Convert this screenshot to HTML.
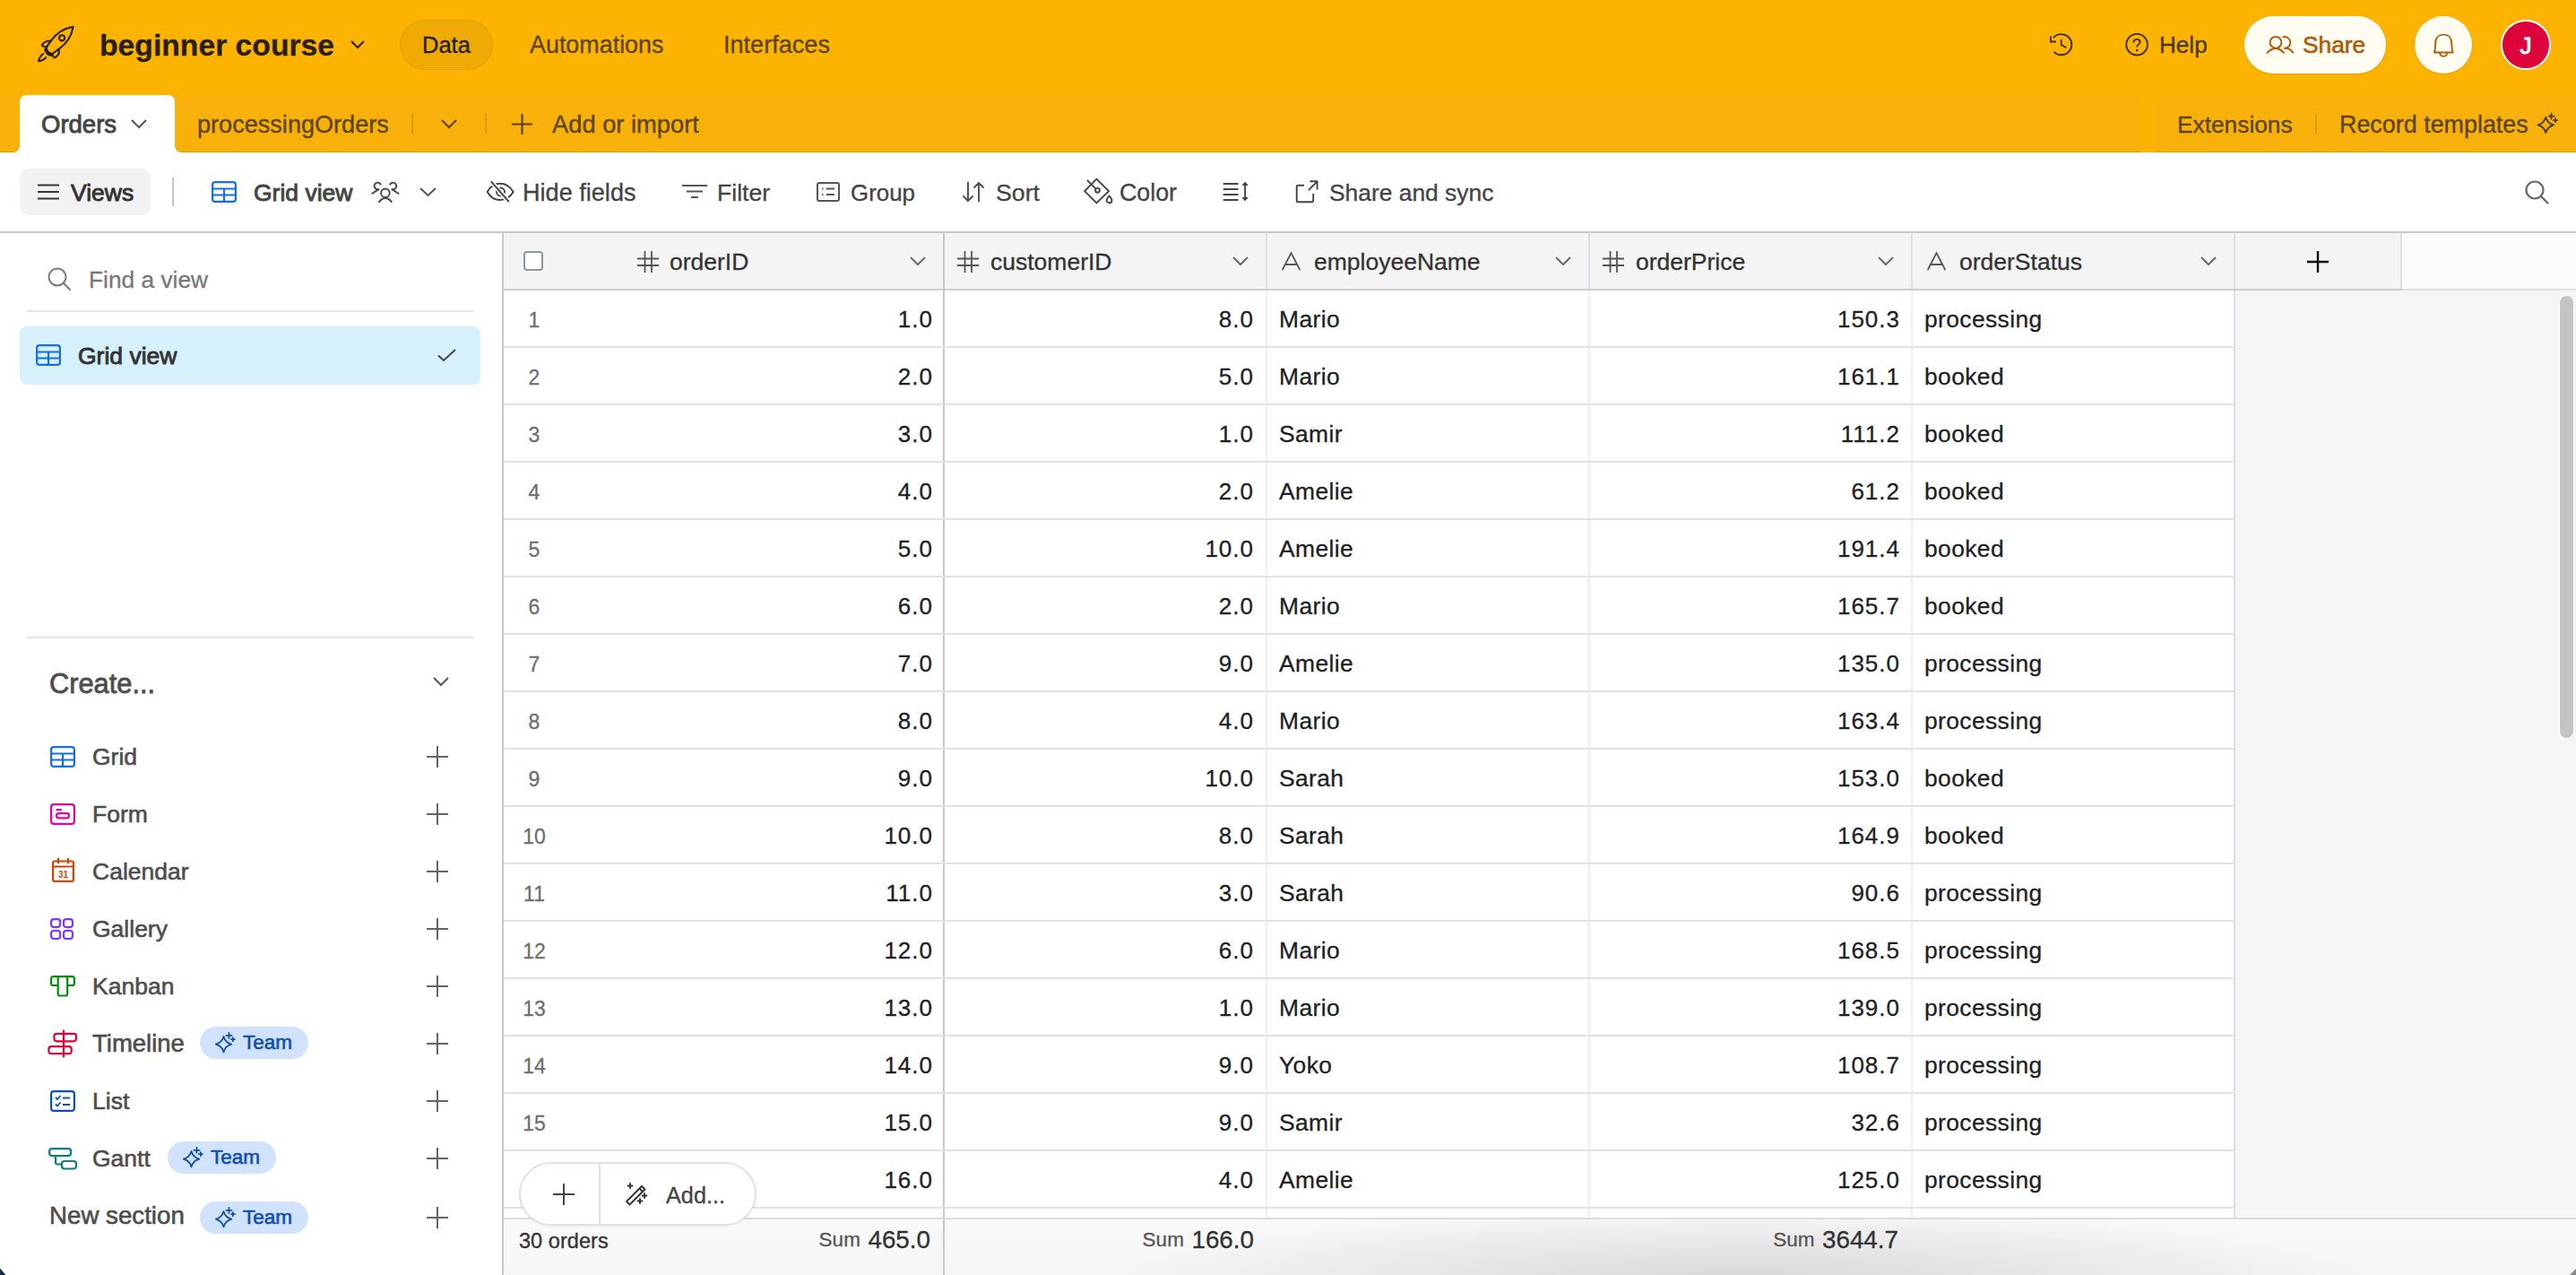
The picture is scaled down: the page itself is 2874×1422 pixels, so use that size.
<!DOCTYPE html>
<html><head><meta charset="utf-8">
<style>
*{box-sizing:border-box;margin:0;padding:0}
html,body{width:2874px;height:1422px;overflow:hidden;background:#fff}
body{position:relative;-webkit-text-stroke:0.3px;font-family:"Liberation Sans",sans-serif;color:#1d1f25}
.a{position:absolute;white-space:nowrap}
svg{position:absolute;overflow:visible}
#top{left:0;top:0;width:2874px;height:170px;background:#fcb400}
.tb{color:#444;font-size:26px;line-height:30px}
.hd{font-size:26.5px;line-height:30px;color:#333}
.cell{font-size:26.4px;line-height:30px;color:#1d1f25;letter-spacing:0.4px}
.num{letter-spacing:1px;font-size:26px}
.rn{font-size:23px;line-height:30px;color:#6e6e6e;text-align:center}
.ft{font-size:23.6px;line-height:30px;color:#333}
.sum{font-size:22.5px;color:#555;position:relative;top:-2px}
.sv{font-size:27.8px;color:#333;margin-left:2px}
.nav{color:#5b4306;font-size:27px;line-height:30px}
</style></head><body>
<!-- TOP BAR -->
<div class="a" id="top"></div>
<!-- rocket -->
<svg style="left:42px;top:29px" width="42" height="42" viewBox="0 0 42 42" fill="none" stroke="#2a1f06" stroke-width="2.1" stroke-linejoin="round" stroke-linecap="round"><path d="M39.6 0.8 C30 2.5 21 8 15 16.3 L9.8 23.6 C9.8 27.5 12.5 30.5 16.3 31 L24.1 25.4 C32 19.5 38 11 39.6 0.8 Z"/><circle cx="27.1" cy="13.3" r="3.1"/><path d="M15 16.5 C10 16.5 6.3 18.3 4.8 21.6 C6 22.9 8 23.4 10.3 23.3"/><path d="M23.6 25.6 C24.6 30 23.2 33.5 18.8 35.5 C17.3 34.5 16.5 33 16.4 31"/><path d="M8.8 26.2 C9.6 29 12 31.6 15.2 32.3" stroke-width="3.4"/><path d="M6.2 31 C3.5 33 1.6 36 1 39.3 C4.3 39 7.3 37.6 9.3 35.2"/></svg>
<div class="a" style="left:111px;top:31px;font-size:33.7px;font-weight:700;color:#2a1f06;line-height:38px">beginner course</div>
<svg style="left:391px;top:45px" width="16" height="10" viewBox="0 0 16 10" fill="none" stroke="#2a1f06" stroke-width="2"><path d="M1 1 L8 8 L15 1"/></svg>
<div class="a" style="left:446px;top:22px;width:104px;height:56px;border-radius:28px;background:#efaa04;border:1px solid rgba(0,0,0,0.06)"></div>
<div class="a nav" style="left:471px;top:35px;font-size:25.5px;color:#261b02">Data</div>
<div class="a nav" style="left:591px;top:35px;font-size:26.9px">Automations</div>
<div class="a nav" style="left:807px;top:35px;font-size:27.1px">Interfaces</div>

<!-- right of top bar -->
<svg style="left:2280px;top:33px" width="34" height="34" viewBox="0 0 34 34" fill="none" stroke="#3d2c05" stroke-width="1.9" stroke-linecap="butt" stroke-linejoin="miter"><path d="M10.8 9.24 A11.6 11.6 0 1 1 11.5 24.9"/><path d="M7.9 7.6 V13.5 H13.9"/><path d="M19.7 10.9 V16.9 L25.3 20.3"/></svg>
<svg style="left:2368px;top:33px" width="34" height="34" viewBox="0 0 34 34" fill="none" stroke="#3d2c05" stroke-width="1.9"><circle cx="16.1" cy="16.7" r="11.8"/><path d="M12.4 14.6 C12.4 12.1 14 10.9 16.1 10.9 C18.2 10.9 19.6 12.2 19.6 14 C19.6 16.2 16.1 16.7 16.1 19.6"/><circle cx="16.1" cy="23.1" r="1.3" fill="#3d2c05" stroke="none"/></svg>
<div class="a nav" style="left:2409px;top:35px;font-size:26.1px;color:#4a3605">Help</div>
<div class="a" style="left:2504px;top:18px;width:158px;height:64px;border-radius:32px;background:#fffcf2;box-shadow:0 1px 2px rgba(0,0,0,0.12)"></div>
<svg style="left:2520px;top:30px" width="50" height="40" viewBox="0 0 50 40" fill="none" stroke="#b05a06" stroke-width="1.9" stroke-linecap="round"><circle cx="19" cy="17.25" r="6.4"/><path d="M9.6 28.8 Q18.8 19.2 28 28.8"/><path d="M27.3 11.2 A6.4 6.4 0 1 1 30 23.7 L29 23.7"/><path d="M29.5 23.8 Q35 23.8 38.2 28.6"/></svg>
<div class="a" style="left:2569px;top:35px;font-size:26.3px;line-height:30px;color:#b05a06;-webkit-text-stroke:0.6px #b05a06">Share</div>
<div class="a" style="left:2694px;top:18px;width:64px;height:64px;border-radius:32px;background:#fffcf2;box-shadow:0 1px 2px rgba(0,0,0,0.12)"></div>
<svg style="left:2700px;top:30px" width="50" height="40" viewBox="0 0 50 40" fill="none" stroke="#b05a06" stroke-width="1.9" stroke-linejoin="round"><path d="M16 28.5 C17 25 17.2 22 17.2 18 C17.2 12 21 8.6 26.3 8.6 C31.6 8.6 35.2 12 35.2 18 C35.2 22 35.5 25 36.6 28.5 Z"/><path d="M22.2 28.8 C22.6 34.2 29.8 34.2 30.2 28.8"/></svg>
<div class="a" style="left:2790px;top:22px;width:56px;height:56px;border-radius:28px;background:#dc043b;border:2.5px solid #fff"></div>
<div class="a" style="left:2790px;top:36px;width:56px;text-align:center;font-size:26px;line-height:30px;color:#fff;-webkit-text-stroke:0.9px #fff">J</div>

<!-- TAB BAR -->
<div class="a" style="left:0;top:106px;width:2388px;height:64px;background:#f7b10a;border-top-right-radius:12px;box-shadow:inset 0 -1px 0 rgba(150,90,0,0.25)"></div>
<div class="a" style="left:2404px;top:106px;width:470px;height:64px;background:#f7b10a;border-top-left-radius:12px;box-shadow:inset 0 -1px 0 rgba(150,90,0,0.25)"></div>
<div class="a" style="left:22px;top:106px;width:173px;height:64px;background:#fff;border-radius:7px 7px 0 0"></div>
<div class="a" style="left:15px;top:163px;width:7px;height:7px;background:radial-gradient(circle at 0 0,transparent 6.5px,#fff 7px)"></div>
<div class="a" style="left:195px;top:163px;width:7px;height:7px;background:radial-gradient(circle at 100% 0,transparent 6.5px,#fff 7px)"></div>
<div class="a" style="left:46px;top:124px;font-size:27.5px;line-height:30px;color:#444;-webkit-text-stroke:0.9px #444">Orders</div>
<svg style="left:146px;top:133px" width="18" height="10" viewBox="0 0 18 10" fill="none" stroke="#555" stroke-width="2"><path d="M1 1 L9 9 L17 1"/></svg>
<div class="a nav" style="left:220px;top:124px;font-size:27.1px">processingOrders</div>
<div class="a" style="left:459px;top:127px;width:2px;height:23px;background:rgba(120,80,0,0.22)"></div>
<svg style="left:492px;top:133px" width="18" height="10" viewBox="0 0 18 10" fill="none" stroke="#5b4306" stroke-width="2"><path d="M1 1 L9 9 L17 1"/></svg>
<div class="a" style="left:541px;top:127px;width:2px;height:23px;background:rgba(120,80,0,0.22)"></div>
<svg style="left:571px;top:127px" width="23" height="23" viewBox="0 0 23 23" fill="none" stroke="#5b4306" stroke-width="2.2"><path d="M11.5 0 V23 M0 11.5 H23"/></svg>
<div class="a nav" style="left:616px;top:124px;font-size:27.3px">Add or import</div>
<div class="a nav" style="left:2429px;top:124px;font-size:26.3px">Extensions</div>
<div class="a" style="left:2583px;top:127px;width:2px;height:23px;background:rgba(120,80,0,0.22)"></div>
<div class="a nav" style="left:2610px;top:124px;font-size:26.9px">Record templates</div>
<svg style="left:2820px;top:115px" width="54" height="45" viewBox="0 0 54 45" fill="none" stroke="#4a3605" stroke-width="1.8" stroke-linejoin="round" stroke-linecap="round"><path transform="translate(20.3 24.4)" d="M0 -8.7 C1.2 -4.5 4.5 -1.2 8.7 0 C4.5 1.2 1.2 4.5 0 8.7 C-1.2 4.5 -4.5 1.2 -8.7 0 C-4.5 -1.2 -1.2 -4.5 0 -8.7 Z"/><path d="M26.5 11.6 V17.6 M23.5 14.6 H29.5 M30.9 17.2 V21.2 M28.9 19.2 H32.9"/></svg>

<!-- TOOLBAR -->
<div class="a" style="left:0;top:258px;width:2874px;height:2px;background:#c9c9c9"></div>
<div class="a" style="left:22px;top:188px;width:146px;height:52px;border-radius:10px;background:#f2f2f2"></div>
<svg style="left:42px;top:205px" width="24" height="18" viewBox="0 0 24 18" fill="none" stroke="#333" stroke-width="2.2"><path d="M0 1.5 H24 M0 9 H24 M0 16.5 H24"/></svg>
<div class="a tb" style="left:79px;top:200px;color:#333;font-size:26.5px;-webkit-text-stroke:0.9px #333">Views</div>
<div class="a" style="left:192px;top:198px;width:2px;height:32px;background:#c4c4c4"></div>
<svg style="left:236px;top:202px" width="28" height="24" viewBox="0 0 28 24" fill="none" stroke="#166ee1" stroke-width="2.2"><rect x="1.1" y="1.1" width="25.8" height="21.8" rx="3"/><path d="M1 8.5 H27 M1 15.5 H27 M14 8.5 V23"/></svg>
<div class="a tb" style="left:283px;top:200px;color:#444;font-size:26.5px;-webkit-text-stroke:0.9px #444">Grid view</div>
<svg style="left:410px;top:200px" width="40" height="30" viewBox="0 0 40 30" fill="none" stroke="#444" stroke-width="1.9" stroke-linecap="butt"><circle cx="19.9" cy="15.3" r="4.8"/><path d="M12.5 25.6 Q19.9 16.4 27.3 25.6"/><path d="M15 6.3 A3.8 3.8 0 1 0 13 10.9 L4.6 16.2"/><path d="M24.8 6.3 A3.8 3.8 0 1 1 26.8 10.9 L35.2 16.2"/></svg>
<svg style="left:468px;top:209px" width="19" height="10" viewBox="0 0 19 10" fill="none" stroke="#555" stroke-width="2"><path d="M1 1 L9.5 9 L18 1"/></svg>
<svg style="left:540px;top:200px" width="36" height="28" viewBox="0 0 36 28" fill="none" stroke="#444" stroke-width="1.9"><path d="M3.7 14 C7 8 11.5 4.8 18 4.8 C24.5 4.8 29 8 32.7 14 C29 20 24.5 23 18 23 C11.5 23 7 20 3.7 14 Z"/><circle cx="18.5" cy="14" r="4.5"/><path d="M7.9 2.3 L27.8 25" stroke="#fff" stroke-width="5"/><path d="M7.9 2.3 L27.8 25"/></svg>
<div class="a tb" style="left:583px;top:200px;font-size:27.1px">Hide fields</div>
<svg style="left:761px;top:206px" width="28" height="15" viewBox="0 0 28 15" fill="none" stroke="#555" stroke-width="2"><path d="M0 1 H28 M5 7.5 H23 M10 14 H18"/></svg>
<div class="a tb" style="left:800px;top:200px;font-size:26.6px">Filter</div>
<svg style="left:911px;top:203px" width="26" height="22" viewBox="0 0 26 22" fill="none" stroke="#555" stroke-width="2"><rect x="1" y="1" width="24" height="20" rx="2"/><path d="M6 7.5 H7.5 M11 7.5 H20 M6 14 H7.5 M11 14 H20"/></svg>
<div class="a tb" style="left:949px;top:200px;font-size:25.9px">Group</div>
<svg style="left:1074px;top:203px" width="24" height="22" viewBox="0 0 24 22" fill="none" stroke="#555" stroke-width="2" stroke-linecap="round"><path d="M6 0.5 V21 M1 16 L6 21 L11 16 M18 21.5 V1 M13 6 L18 1 L23 6"/></svg>
<div class="a tb" style="left:1111px;top:200px;font-size:26.7px">Sort</div>
<svg style="left:1205px;top:195px" width="40" height="36" viewBox="0 0 40 36" fill="none" stroke="#444" stroke-width="1.9" stroke-linejoin="round"><path d="M18.4 4.6 L32 18.2 L18.4 31.4 L5.1 18.2 Z"/><path d="M8 6 L17.6 15.6"/><circle cx="19.5" cy="17.3" r="2.4"/><path d="M32.5 23.3 C34.5 25.6 35.4 27 35.4 28.4 A2.9 2.9 0 0 1 29.6 28.4 C29.6 27 30.5 25.6 32.5 23.3 Z"/></svg>
<div class="a tb" style="left:1249px;top:200px;font-size:26.8px">Color</div>
<svg style="left:1360px;top:200px" width="36" height="28" viewBox="0 0 36 28" fill="#444" stroke="#444" stroke-width="1.9"><path d="M4.7 5 H21.5 M4.7 11 H21.5 M4.7 17 H21.5 M4.7 23 H21.5" fill="none"/><path d="M29.1 5 V22" fill="none"/><path d="M26.2 6.5 L29.1 3.2 L32 6.5 Z M26.2 20.5 L29.1 23.8 L32 20.5 Z" stroke-width="1" stroke-linejoin="round"/></svg>
<svg style="left:1440px;top:196px" width="36" height="34" viewBox="0 0 36 34" fill="none" stroke="#444" stroke-width="1.9" stroke-linejoin="round"><path d="M14.9 10.7 H8.6 A1.9 1.9 0 0 0 6.7 12.6 V27.3 A1.9 1.9 0 0 0 8.6 29.2 H23.3 A1.9 1.9 0 0 0 25.2 27.3 V19.9"/><path d="M19.8 16.1 L29.6 6.3 M21.4 6.3 H29.6 V15.6"/></svg>
<div class="a tb" style="left:1483px;top:200px;font-size:26.4px">Share and sync</div>
<svg style="left:2817px;top:201px" width="27" height="27" viewBox="0 0 27 27" fill="none" stroke="#666" stroke-width="2.2" stroke-linecap="round"><circle cx="11" cy="11" r="9.5"/><path d="M18 18 L25.5 25.5"/></svg>

<!-- SIDEBAR -->
<div class="a" style="left:560px;top:260px;width:2px;height:1162px;background:#c9c9c9"></div>
<svg style="left:53px;top:298px" width="26" height="26" viewBox="0 0 26 26" fill="none" stroke="#777" stroke-width="2" stroke-linecap="round"><circle cx="11" cy="11" r="9.5"/><path d="M18 18 L25 25"/></svg>
<div class="a" style="left:99px;top:297px;font-size:26.3px;line-height:30px;color:#777">Find a view</div>
<div class="a" style="left:30px;top:346px;width:498px;height:2px;background:#e3e3e3"></div>
<div class="a" style="left:22px;top:364px;width:514px;height:65px;border-radius:8px;background:#d6f0fc"></div>
<svg style="left:40px;top:384px" width="28" height="24" viewBox="0 0 28 24" fill="none" stroke="#166ee1" stroke-width="2.2"><rect x="1.1" y="1.1" width="25.8" height="21.8" rx="3"/><path d="M1 8.5 H27 M1 15.5 H27 M14 8.5 V23"/></svg>
<div class="a" style="left:87px;top:382px;font-size:26.5px;line-height:30px;color:#333;-webkit-text-stroke:0.9px #333">Grid view</div>
<svg style="left:488px;top:389px" width="21" height="14" viewBox="0 0 21 14" fill="none" stroke="#444" stroke-width="2"><path d="M1 7.5 L7 13 L20 1"/></svg>
<div class="a" style="left:30px;top:710px;width:498px;height:2px;background:#e3e3e3"></div>
<div class="a" style="left:55px;top:746px;font-size:30.8px;line-height:34px;color:#4d4d4d;-webkit-text-stroke:0.8px #4d4d4d">Create...</div>
<svg style="left:483px;top:755px" width="18" height="10" viewBox="0 0 18 10" fill="none" stroke="#555" stroke-width="2"><path d="M1 1 L9 9 L17 1"/></svg>
<svg style="left:56px;top:832px" width="28" height="24" viewBox="0 0 28 24" fill="none" stroke="#166ee1" stroke-width="2.2"><rect x="1.1" y="1.1" width="25.8" height="21.8" rx="3"/><path d="M1 8.5 H27 M1 15.5 H27 M14 8.5 V23"/></svg>
<div class="a" style="left:103px;top:829px;font-size:26.5px;line-height:30px;color:#4d4d4d;-webkit-text-stroke:0.6px #4d4d4d">Grid</div>
<svg style="left:476px;top:832px" width="24" height="24" viewBox="0 0 24 24" fill="none" stroke="#666" stroke-width="2"><path d="M12 0 V24 M0 12 H24"/></svg>
<svg style="left:56px;top:896px" width="28" height="24" viewBox="0 0 28 24" fill="none" stroke="#dd04a8" stroke-width="2.2"><rect x="1.1" y="1.1" width="25.8" height="21.8" rx="3"/><path d="M7.5 7.2 H12" stroke-linecap="round"/><rect x="7" y="11.2" width="14" height="5.2" rx="2.6"/></svg>
<div class="a" style="left:103px;top:893px;font-size:26.5px;line-height:30px;color:#4d4d4d;-webkit-text-stroke:0.6px #4d4d4d">Form</div>
<svg style="left:476px;top:896px" width="24" height="24" viewBox="0 0 24 24" fill="none" stroke="#666" stroke-width="2"><path d="M12 0 V24 M0 12 H24"/></svg>
<svg style="left:58px;top:957px" width="25" height="27" viewBox="0 0 25 27" fill="none" stroke="#d54401" stroke-width="2.2"><rect x="1.1" y="3.5" width="22.8" height="22.4" rx="2"/><path d="M1 9.5 H24 M7 0 V6 M18 0 V6"/><text x="12.5" y="22" font-family="Liberation Sans" font-size="10" font-weight="700" fill="#d54401" stroke="none" text-anchor="middle">31</text></svg>
<div class="a" style="left:103px;top:957px;font-size:26.5px;line-height:30px;color:#4d4d4d;-webkit-text-stroke:0.6px #4d4d4d">Calendar</div>
<svg style="left:476px;top:960px" width="24" height="24" viewBox="0 0 24 24" fill="none" stroke="#666" stroke-width="2"><path d="M12 0 V24 M0 12 H24"/></svg>
<svg style="left:56px;top:1024px" width="26" height="24" viewBox="0 0 26 24" fill="none" stroke="#7c37ef" stroke-width="2.2"><rect x="1.1" y="1.1" width="10" height="9" rx="3"/><rect x="15" y="1.1" width="10" height="9" rx="3"/><rect x="1.1" y="14" width="10" height="9" rx="3"/><rect x="15" y="14" width="10" height="9" rx="3"/></svg>
<div class="a" style="left:103px;top:1021px;font-size:26.5px;line-height:30px;color:#4d4d4d;-webkit-text-stroke:0.6px #4d4d4d">Gallery</div>
<svg style="left:476px;top:1024px" width="24" height="24" viewBox="0 0 24 24" fill="none" stroke="#666" stroke-width="2"><path d="M12 0 V24 M0 12 H24"/></svg>
<svg style="left:56px;top:1088px" width="28" height="24" viewBox="0 0 28 24" fill="none" stroke="#048a0e" stroke-width="2.2" stroke-linejoin="round"><path d="M19.2 11 H24.9 A2 2 0 0 0 26.9 9 V3.5 A2.4 2.4 0 0 0 24.5 1.1 H3.5 A2.4 2.4 0 0 0 1.1 3.5 V9 A2 2 0 0 0 3.1 11 H8.7"/><path d="M8.7 1.1 V20.5 A2 2 0 0 0 10.7 22.5 H17.2 A2 2 0 0 0 19.2 20.5 V1.1"/></svg>
<div class="a" style="left:103px;top:1085px;font-size:26.5px;line-height:30px;color:#4d4d4d;-webkit-text-stroke:0.6px #4d4d4d">Kanban</div>
<svg style="left:476px;top:1088px" width="24" height="24" viewBox="0 0 24 24" fill="none" stroke="#666" stroke-width="2"><path d="M12 0 V24 M0 12 H24"/></svg>
<svg style="left:53px;top:1147px" width="34" height="34" viewBox="0 0 34 34" fill="none" stroke="#dc043b" stroke-width="2.2"><path d="M18 1.7 V32.3"/><rect x="7.4" y="5.8" width="24.6" height="8.5" rx="3"/><rect x="1.4" y="20.2" width="25.3" height="8" rx="3"/></svg>
<div class="a" style="left:103px;top:1149px;font-size:27.5px;line-height:30px;color:#4d4d4d;-webkit-text-stroke:0.6px #4d4d4d">Timeline</div>
<svg style="left:476px;top:1152px" width="24" height="24" viewBox="0 0 24 24" fill="none" stroke="#666" stroke-width="2"><path d="M12 0 V24 M0 12 H24"/></svg>
<svg style="left:56px;top:1216px" width="28" height="24" viewBox="0 0 28 24" fill="none" stroke="#0d52ac" stroke-width="2.2"><rect x="1.1" y="1.1" width="25.8" height="21.8" rx="3"/><path d="M6 8 L8 10 L11.5 6 M6 15.5 L8 17.5 L11.5 13.5" stroke-width="1.8"/><path d="M14 8.5 H22 M14 16 H22" stroke-width="1.8"/></svg>
<div class="a" style="left:103px;top:1213px;font-size:26.5px;line-height:30px;color:#4d4d4d;-webkit-text-stroke:0.6px #4d4d4d">List</div>
<svg style="left:476px;top:1216px" width="24" height="24" viewBox="0 0 24 24" fill="none" stroke="#666" stroke-width="2"><path d="M12 0 V24 M0 12 H24"/></svg>
<svg style="left:54px;top:1280px" width="32" height="25" viewBox="0 0 32 25" fill="none" stroke="#0f7e7e" stroke-width="2.2"><rect x="1.1" y="1.1" width="24" height="8" rx="3"/><rect x="15" y="15" width="16" height="8.5" rx="3"/><path d="M8 9 V16 A2 2 0 0 0 10 18.5 H15"/></svg>
<div class="a" style="left:103px;top:1277px;font-size:26.5px;line-height:30px;color:#4d4d4d;-webkit-text-stroke:0.6px #4d4d4d">Gantt</div>
<svg style="left:476px;top:1280px" width="24" height="24" viewBox="0 0 24 24" fill="none" stroke="#666" stroke-width="2"><path d="M12 0 V24 M0 12 H24"/></svg>
<div class="a" style="left:55px;top:1341px;font-size:27.7px;line-height:30px;color:#4d4d4d;-webkit-text-stroke:0.6px #4d4d4d">New section</div>
<svg style="left:476px;top:1346px" width="24" height="24" viewBox="0 0 24 24" fill="none" stroke="#666" stroke-width="2"><path d="M12 0 V24 M0 12 H24"/></svg>
<div class="a" style="left:223px;top:1145px;width:121px;height:36px;border-radius:18px;background:#d1e2fc"></div><svg style="left:223px;top:1145px" width="50" height="36" viewBox="0 0 50 36" fill="none" stroke="#0f4fad" stroke-width="1.8" stroke-linejoin="round" stroke-linecap="round"><path transform="translate(26.5 19.7)" d="M0 -8.7 C1.2 -4.5 4.5 -1.2 8.7 0 C4.5 1.2 1.2 4.5 0 8.7 C-1.2 4.5 -4.5 1.2 -8.7 0 C-4.5 -1.2 -1.2 -4.5 0 -8.7 Z"/><path d="M32.5 6.8 V12.8 M29.5 9.8 H35.5 M36.9 12.2 V16.2 M34.9 14.2 H38.9"/></svg><div class="a" style="left:271px;top:1148px;font-size:22.5px;line-height:30px;color:#0f4fad;-webkit-text-stroke:0.6px #0f4fad">Team</div>
<div class="a" style="left:187px;top:1273px;width:121px;height:36px;border-radius:18px;background:#d1e2fc"></div><svg style="left:187px;top:1273px" width="50" height="36" viewBox="0 0 50 36" fill="none" stroke="#0f4fad" stroke-width="1.8" stroke-linejoin="round" stroke-linecap="round"><path transform="translate(26.5 19.7)" d="M0 -8.7 C1.2 -4.5 4.5 -1.2 8.7 0 C4.5 1.2 1.2 4.5 0 8.7 C-1.2 4.5 -4.5 1.2 -8.7 0 C-4.5 -1.2 -1.2 -4.5 0 -8.7 Z"/><path d="M32.5 6.8 V12.8 M29.5 9.8 H35.5 M36.9 12.2 V16.2 M34.9 14.2 H38.9"/></svg><div class="a" style="left:235px;top:1276px;font-size:22.5px;line-height:30px;color:#0f4fad;-webkit-text-stroke:0.6px #0f4fad">Team</div>
<div class="a" style="left:223px;top:1340px;width:121px;height:36px;border-radius:18px;background:#d1e2fc"></div><svg style="left:223px;top:1340px" width="50" height="36" viewBox="0 0 50 36" fill="none" stroke="#0f4fad" stroke-width="1.8" stroke-linejoin="round" stroke-linecap="round"><path transform="translate(26.5 19.7)" d="M0 -8.7 C1.2 -4.5 4.5 -1.2 8.7 0 C4.5 1.2 1.2 4.5 0 8.7 C-1.2 4.5 -4.5 1.2 -8.7 0 C-4.5 -1.2 -1.2 -4.5 0 -8.7 Z"/><path d="M32.5 6.8 V12.8 M29.5 9.8 H35.5 M36.9 12.2 V16.2 M34.9 14.2 H38.9"/></svg><div class="a" style="left:271px;top:1343px;font-size:22.5px;line-height:30px;color:#0f4fad;-webkit-text-stroke:0.6px #0f4fad">Team</div>

<!-- GRID -->
<div class="a" style="left:562px;top:260px;width:2312px;height:62px;background:#fafafa"></div>
<div class="a" style="left:562px;top:260px;width:2118px;height:62px;background:#f4f4f4"></div>
<div class="a" style="left:562px;top:322px;width:2118px;height:2px;background:#cdcdcd"></div><div class="a" style="left:2680px;top:322px;width:194px;height:2px;background:#dfe3e6"></div>
<div class="a" style="left:2494px;top:324px;width:380px;height:1035px;background:#f5f5f5"></div>
<div class="a" style="left:562px;top:324px;width:1932px;height:1035px;background:#fff"></div>
<div class="a" style="left:1052px;top:260px;width:2px;height:62px;background:#c8c8c8"></div>
<div class="a" style="left:1412px;top:260px;width:2px;height:62px;background:#dde1e6"></div>
<div class="a" style="left:1772px;top:260px;width:2px;height:62px;background:#dde1e6"></div>
<div class="a" style="left:2132px;top:260px;width:2px;height:62px;background:#dde1e6"></div>
<div class="a" style="left:2492px;top:260px;width:2px;height:62px;background:#dde1e6"></div>
<div class="a" style="left:2678px;top:260px;width:2px;height:62px;background:#dde1e6"></div>
<div class="a" style="left:1052px;top:324px;width:2px;height:1035px;background:#c8c8c8"></div>
<div class="a" style="left:1412px;top:324px;width:2px;height:1035px;background:#eceef0"></div>
<div class="a" style="left:1772px;top:324px;width:2px;height:1035px;background:#eceef0"></div>
<div class="a" style="left:2132px;top:324px;width:2px;height:1035px;background:#eceef0"></div>
<div class="a" style="left:2492px;top:324px;width:2px;height:1035px;background:#dde1e6"></div>
<div class="a" style="left:562px;top:386px;width:1932px;height:2px;background:#dfe3e6"></div>
<div class="a" style="left:562px;top:450px;width:1932px;height:2px;background:#dfe3e6"></div>
<div class="a" style="left:562px;top:514px;width:1932px;height:2px;background:#dfe3e6"></div>
<div class="a" style="left:562px;top:578px;width:1932px;height:2px;background:#dfe3e6"></div>
<div class="a" style="left:562px;top:642px;width:1932px;height:2px;background:#dfe3e6"></div>
<div class="a" style="left:562px;top:706px;width:1932px;height:2px;background:#dfe3e6"></div>
<div class="a" style="left:562px;top:770px;width:1932px;height:2px;background:#dfe3e6"></div>
<div class="a" style="left:562px;top:834px;width:1932px;height:2px;background:#dfe3e6"></div>
<div class="a" style="left:562px;top:898px;width:1932px;height:2px;background:#dfe3e6"></div>
<div class="a" style="left:562px;top:962px;width:1932px;height:2px;background:#dfe3e6"></div>
<div class="a" style="left:562px;top:1026px;width:1932px;height:2px;background:#dfe3e6"></div>
<div class="a" style="left:562px;top:1090px;width:1932px;height:2px;background:#dfe3e6"></div>
<div class="a" style="left:562px;top:1154px;width:1932px;height:2px;background:#dfe3e6"></div>
<div class="a" style="left:562px;top:1218px;width:1932px;height:2px;background:#dfe3e6"></div>
<div class="a" style="left:562px;top:1282px;width:1932px;height:2px;background:#dfe3e6"></div>
<div class="a" style="left:562px;top:1346px;width:1932px;height:2px;background:#dfe3e6"></div>
<div class="a" style="left:584px;top:280px;width:22px;height:22px;border:2px solid #8a9aa3;border-radius:4px;background:#fff"></div>
<svg style="left:711px;top:280px" width="24" height="24" viewBox="0 0 24 24" fill="none" stroke="#555" stroke-width="1.8"><path d="M8.5 0 V24 M16 0 V24 M0 8.5 H24 M0 16 H24"/></svg>
<div class="a hd" style="left:747px;top:277px">orderID</div>
<svg style="left:1015px;top:286px" width="18" height="10" viewBox="0 0 18 10" fill="none" stroke="#6b6b6b" stroke-width="2"><path d="M1 1 L9 9 L17 1"/></svg>
<svg style="left:1068px;top:280px" width="24" height="24" viewBox="0 0 24 24" fill="none" stroke="#555" stroke-width="1.8"><path d="M8.5 0 V24 M16 0 V24 M0 8.5 H24 M0 16 H24"/></svg>
<div class="a hd" style="left:1105px;top:277px">customerID</div>
<svg style="left:1375px;top:286px" width="18" height="10" viewBox="0 0 18 10" fill="none" stroke="#6b6b6b" stroke-width="2"><path d="M1 1 L9 9 L17 1"/></svg>
<svg style="left:1430px;top:281px" width="21" height="20" viewBox="0 0 21 20" fill="none" stroke="#555" stroke-width="1.8" stroke-linecap="round"><path d="M1 19.5 L10.5 1.2 L20 19.5 M5 14 H16"/></svg>
<div class="a hd" style="left:1466px;top:277px">employeeName</div>
<svg style="left:1735px;top:286px" width="18" height="10" viewBox="0 0 18 10" fill="none" stroke="#6b6b6b" stroke-width="2"><path d="M1 1 L9 9 L17 1"/></svg>
<svg style="left:1788px;top:280px" width="24" height="24" viewBox="0 0 24 24" fill="none" stroke="#555" stroke-width="1.8"><path d="M8.5 0 V24 M16 0 V24 M0 8.5 H24 M0 16 H24"/></svg>
<div class="a hd" style="left:1825px;top:277px">orderPrice</div>
<svg style="left:2095px;top:286px" width="18" height="10" viewBox="0 0 18 10" fill="none" stroke="#6b6b6b" stroke-width="2"><path d="M1 1 L9 9 L17 1"/></svg>
<svg style="left:2150px;top:281px" width="21" height="20" viewBox="0 0 21 20" fill="none" stroke="#555" stroke-width="1.8" stroke-linecap="round"><path d="M1 19.5 L10.5 1.2 L20 19.5 M5 14 H16"/></svg>
<div class="a hd" style="left:2186px;top:277px">orderStatus</div>
<svg style="left:2455px;top:286px" width="18" height="10" viewBox="0 0 18 10" fill="none" stroke="#6b6b6b" stroke-width="2"><path d="M1 1 L9 9 L17 1"/></svg>
<svg style="left:2574px;top:280px" width="24" height="24" viewBox="0 0 24 24" fill="none" stroke="#111" stroke-width="2.4"><path d="M12 0 V24 M0 12 H24"/></svg>
<div class="a rn" style="left:562px;top:342px;width:68px">1</div>
<div class="a cell num" style="right:1833px;top:341px">1.0</div>
<div class="a cell num" style="right:1475px;top:341px">8.0</div>
<div class="a cell" style="left:1427px;top:341px">Mario</div>
<div class="a cell num" style="right:754px;top:341px">150.3</div>
<div class="a cell" style="left:2147px;top:341px">processing</div>
<div class="a rn" style="left:562px;top:406px;width:68px">2</div>
<div class="a cell num" style="right:1833px;top:405px">2.0</div>
<div class="a cell num" style="right:1475px;top:405px">5.0</div>
<div class="a cell" style="left:1427px;top:405px">Mario</div>
<div class="a cell num" style="right:754px;top:405px">161.1</div>
<div class="a cell" style="left:2147px;top:405px">booked</div>
<div class="a rn" style="left:562px;top:470px;width:68px">3</div>
<div class="a cell num" style="right:1833px;top:469px">3.0</div>
<div class="a cell num" style="right:1475px;top:469px">1.0</div>
<div class="a cell" style="left:1427px;top:469px">Samir</div>
<div class="a cell num" style="right:754px;top:469px">111.2</div>
<div class="a cell" style="left:2147px;top:469px">booked</div>
<div class="a rn" style="left:562px;top:534px;width:68px">4</div>
<div class="a cell num" style="right:1833px;top:533px">4.0</div>
<div class="a cell num" style="right:1475px;top:533px">2.0</div>
<div class="a cell" style="left:1427px;top:533px">Amelie</div>
<div class="a cell num" style="right:754px;top:533px">61.2</div>
<div class="a cell" style="left:2147px;top:533px">booked</div>
<div class="a rn" style="left:562px;top:598px;width:68px">5</div>
<div class="a cell num" style="right:1833px;top:597px">5.0</div>
<div class="a cell num" style="right:1475px;top:597px">10.0</div>
<div class="a cell" style="left:1427px;top:597px">Amelie</div>
<div class="a cell num" style="right:754px;top:597px">191.4</div>
<div class="a cell" style="left:2147px;top:597px">booked</div>
<div class="a rn" style="left:562px;top:662px;width:68px">6</div>
<div class="a cell num" style="right:1833px;top:661px">6.0</div>
<div class="a cell num" style="right:1475px;top:661px">2.0</div>
<div class="a cell" style="left:1427px;top:661px">Mario</div>
<div class="a cell num" style="right:754px;top:661px">165.7</div>
<div class="a cell" style="left:2147px;top:661px">booked</div>
<div class="a rn" style="left:562px;top:726px;width:68px">7</div>
<div class="a cell num" style="right:1833px;top:725px">7.0</div>
<div class="a cell num" style="right:1475px;top:725px">9.0</div>
<div class="a cell" style="left:1427px;top:725px">Amelie</div>
<div class="a cell num" style="right:754px;top:725px">135.0</div>
<div class="a cell" style="left:2147px;top:725px">processing</div>
<div class="a rn" style="left:562px;top:790px;width:68px">8</div>
<div class="a cell num" style="right:1833px;top:789px">8.0</div>
<div class="a cell num" style="right:1475px;top:789px">4.0</div>
<div class="a cell" style="left:1427px;top:789px">Mario</div>
<div class="a cell num" style="right:754px;top:789px">163.4</div>
<div class="a cell" style="left:2147px;top:789px">processing</div>
<div class="a rn" style="left:562px;top:854px;width:68px">9</div>
<div class="a cell num" style="right:1833px;top:853px">9.0</div>
<div class="a cell num" style="right:1475px;top:853px">10.0</div>
<div class="a cell" style="left:1427px;top:853px">Sarah</div>
<div class="a cell num" style="right:754px;top:853px">153.0</div>
<div class="a cell" style="left:2147px;top:853px">booked</div>
<div class="a rn" style="left:562px;top:918px;width:68px">10</div>
<div class="a cell num" style="right:1833px;top:917px">10.0</div>
<div class="a cell num" style="right:1475px;top:917px">8.0</div>
<div class="a cell" style="left:1427px;top:917px">Sarah</div>
<div class="a cell num" style="right:754px;top:917px">164.9</div>
<div class="a cell" style="left:2147px;top:917px">booked</div>
<div class="a rn" style="left:562px;top:982px;width:68px">11</div>
<div class="a cell num" style="right:1833px;top:981px">11.0</div>
<div class="a cell num" style="right:1475px;top:981px">3.0</div>
<div class="a cell" style="left:1427px;top:981px">Sarah</div>
<div class="a cell num" style="right:754px;top:981px">90.6</div>
<div class="a cell" style="left:2147px;top:981px">processing</div>
<div class="a rn" style="left:562px;top:1046px;width:68px">12</div>
<div class="a cell num" style="right:1833px;top:1045px">12.0</div>
<div class="a cell num" style="right:1475px;top:1045px">6.0</div>
<div class="a cell" style="left:1427px;top:1045px">Mario</div>
<div class="a cell num" style="right:754px;top:1045px">168.5</div>
<div class="a cell" style="left:2147px;top:1045px">processing</div>
<div class="a rn" style="left:562px;top:1110px;width:68px">13</div>
<div class="a cell num" style="right:1833px;top:1109px">13.0</div>
<div class="a cell num" style="right:1475px;top:1109px">1.0</div>
<div class="a cell" style="left:1427px;top:1109px">Mario</div>
<div class="a cell num" style="right:754px;top:1109px">139.0</div>
<div class="a cell" style="left:2147px;top:1109px">processing</div>
<div class="a rn" style="left:562px;top:1174px;width:68px">14</div>
<div class="a cell num" style="right:1833px;top:1173px">14.0</div>
<div class="a cell num" style="right:1475px;top:1173px">9.0</div>
<div class="a cell" style="left:1427px;top:1173px">Yoko</div>
<div class="a cell num" style="right:754px;top:1173px">108.7</div>
<div class="a cell" style="left:2147px;top:1173px">processing</div>
<div class="a rn" style="left:562px;top:1238px;width:68px">15</div>
<div class="a cell num" style="right:1833px;top:1237px">15.0</div>
<div class="a cell num" style="right:1475px;top:1237px">9.0</div>
<div class="a cell" style="left:1427px;top:1237px">Samir</div>
<div class="a cell num" style="right:754px;top:1237px">32.6</div>
<div class="a cell" style="left:2147px;top:1237px">processing</div>
<div class="a cell num" style="right:1833px;top:1301px">16.0</div>
<div class="a cell num" style="right:1475px;top:1301px">4.0</div>
<div class="a cell" style="left:1427px;top:1301px">Amelie</div>
<div class="a cell num" style="right:754px;top:1301px">125.0</div>
<div class="a cell" style="left:2147px;top:1301px">processing</div>
<div class="a" style="left:2855px;top:329px;width:17px;height:495px;border-radius:9px;background:#c4c4c4;border:1px solid #fff"></div>
<div class="a" style="left:562px;top:1358px;width:2312px;height:64px;background:radial-gradient(ellipse 700px 80px at 1380px 105%,#d9d9d9,rgba(235,235,235,0) 100%),linear-gradient(#f9f9f9,#f5f5f5);border-top:2px solid #d9dde0"></div>
<div class="a" style="left:1052px;top:1360px;width:2px;height:62px;background:#c8c8c8"></div>
<div class="a ft" style="left:579px;top:1369px">30 orders</div>
<div class="a ft" style="right:1836px;top:1368px"><span class="sum">Sum</span> <span class="sv">465.0</span></div>
<div class="a ft" style="right:1475px;top:1368px"><span class="sum">Sum</span> <span class="sv">166.0</span></div>
<div class="a ft" style="right:756px;top:1368px"><span class="sum">Sum</span> <span class="sv">3644.7</span></div>
<!-- add pill -->
<div class="a" style="left:579px;top:1296px;width:265px;height:71px;border-radius:36px;background:#fff;border:2px solid #e2e2e2;box-shadow:0 1px 3px rgba(0,0,0,0.05)"></div>
<div class="a" style="left:668px;top:1298px;width:2px;height:67px;background:#e2e2e2"></div>
<svg style="left:617px;top:1320px" width="24" height="24" viewBox="0 0 24 24" fill="none" stroke="#444" stroke-width="2"><path d="M12 0 V24 M0 12 H24"/></svg>
<svg style="left:697px;top:1319px" width="28" height="26" viewBox="0 0 28 26" fill="none" stroke="#333" stroke-width="1.9" stroke-linejoin="round" stroke-linecap="round">
 <path d="M2 21 L19 4 L22.5 7.5 L5.5 24.5 Z M16.5 6.5 L20 10"/>
 <path d="M6 1 V6 M3.5 3.5 H8.5 M22 12 V17 M19.5 14.5 H24.5 M17 18 V23 M14.5 20.5 H19.5"/>
</svg>
<div class="a" style="left:743px;top:1318px;font-size:25.3px;line-height:30px;color:#444">Add...</div>
<svg style="left:0;top:1412px" width="10" height="10" viewBox="0 0 10 10"><path d="M0 2.5 L6.5 10 L0 10 Z" fill="#132a45"/></svg>
<svg style="left:2864px;top:1412px" width="10" height="10" viewBox="0 0 10 10"><path d="M10 3 L10 10 L3 10 Z" fill="#8a8a8a"/></svg>
</body></html>
